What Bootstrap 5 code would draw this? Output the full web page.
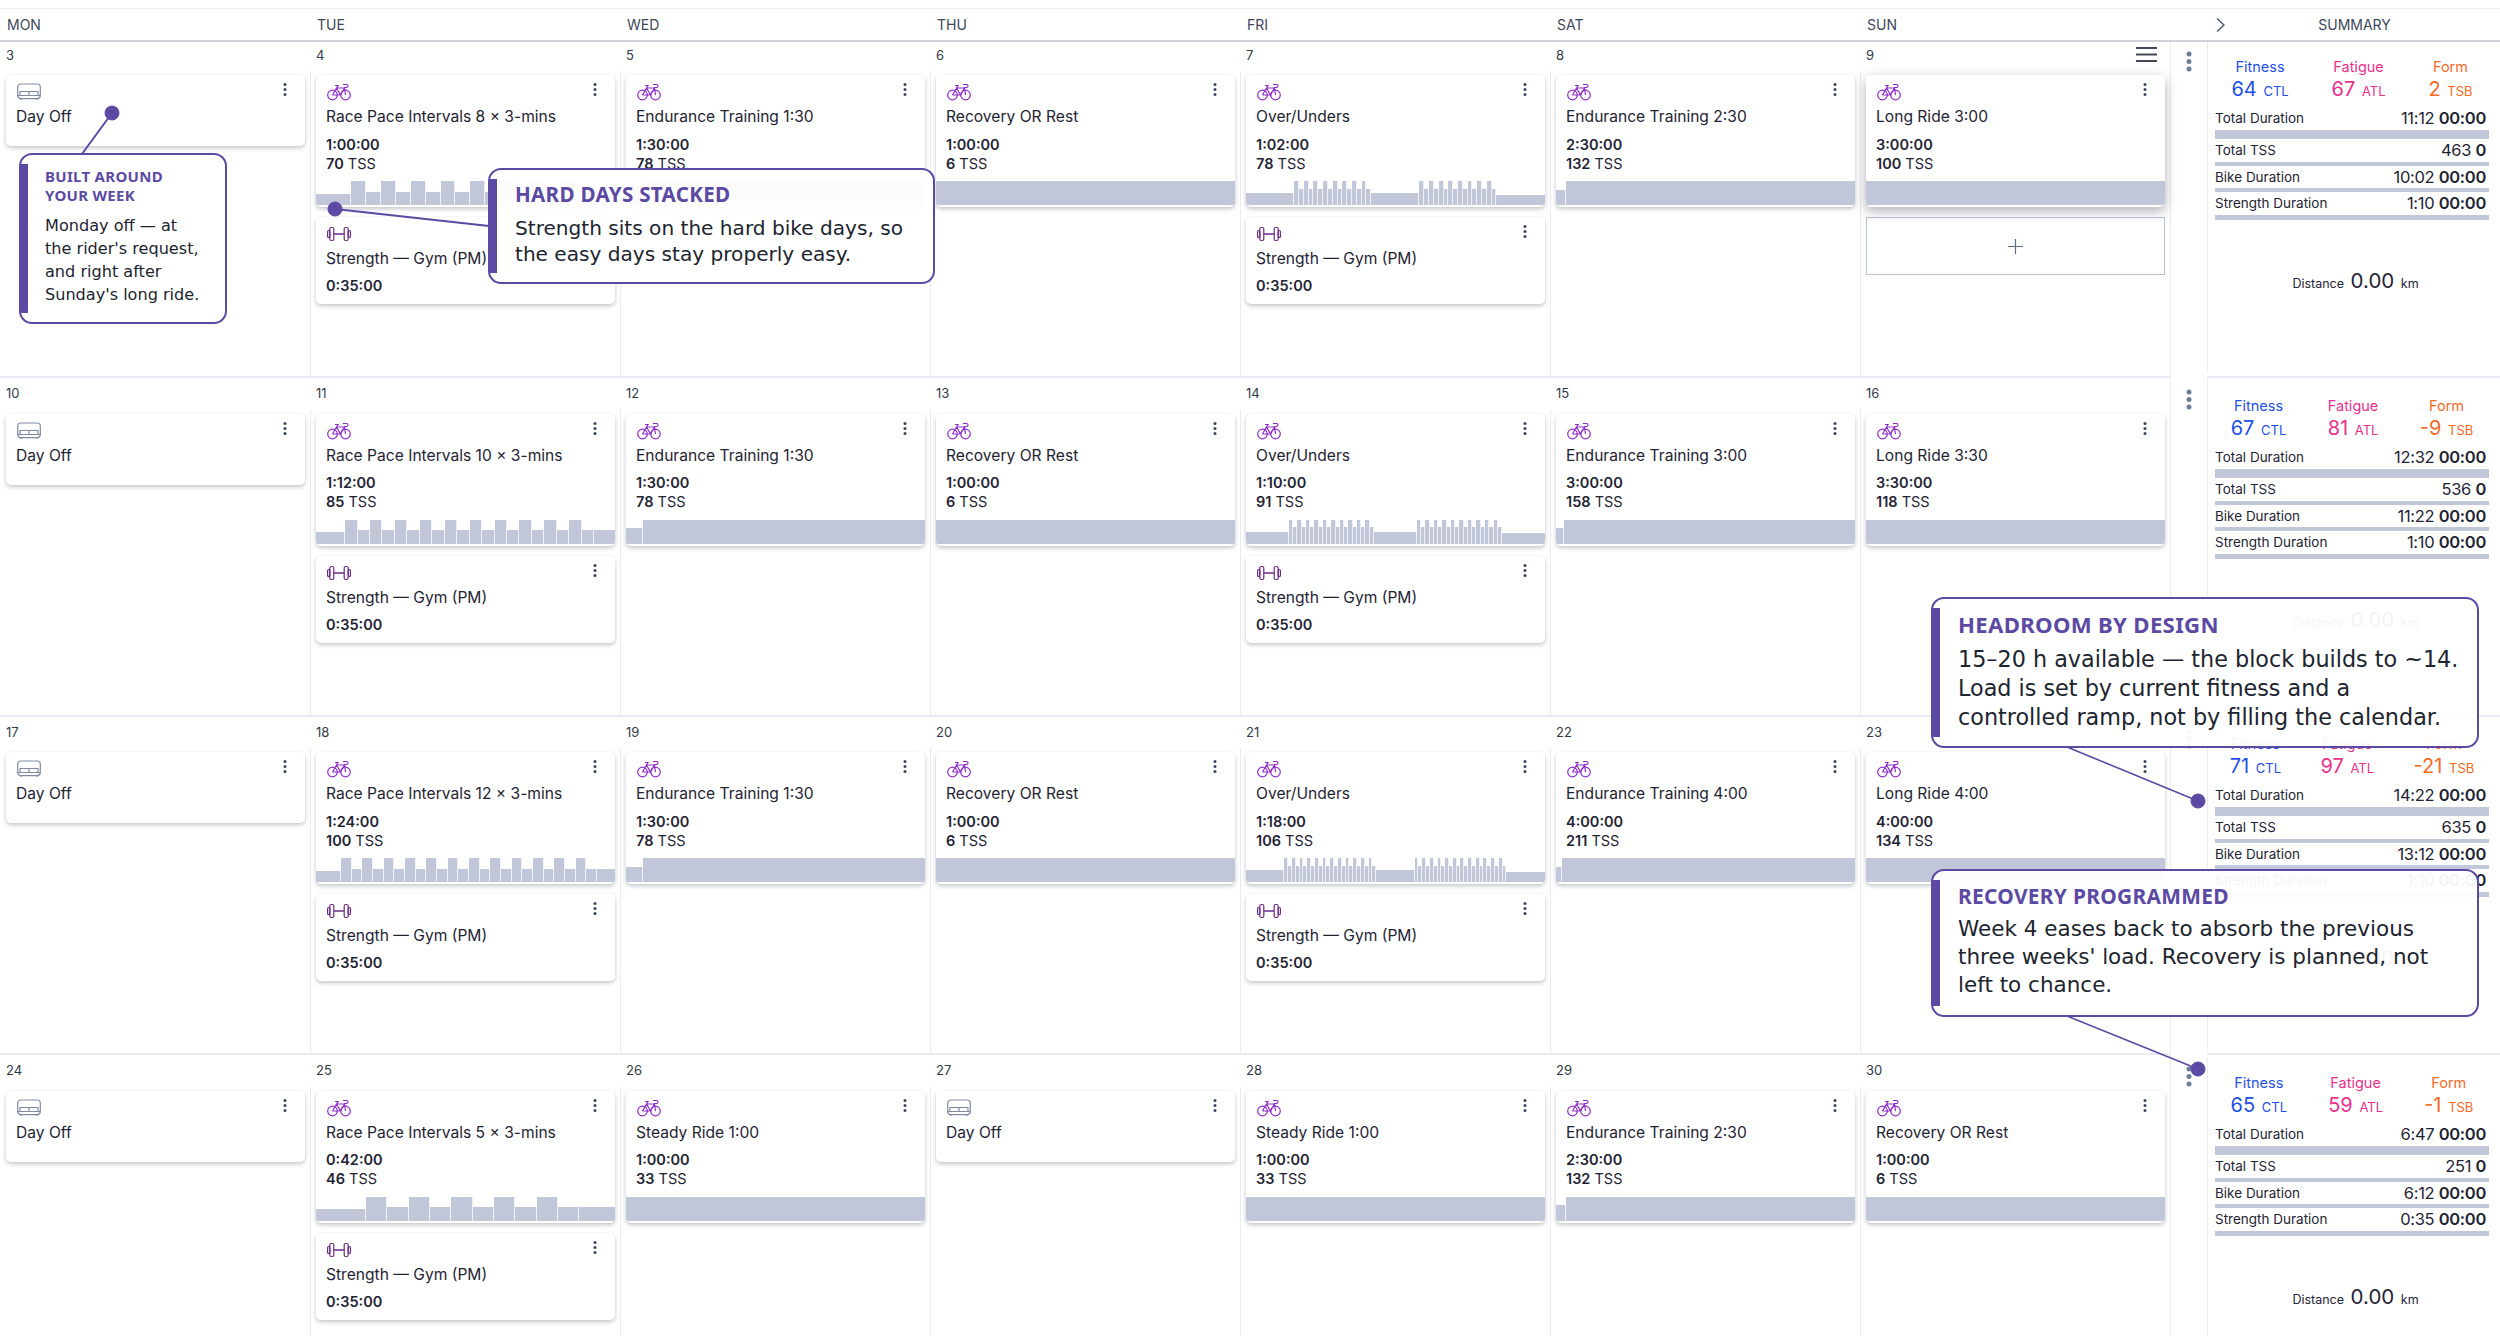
<!DOCTYPE html>
<html lang="en">
<head>
<meta charset="UTF-8">
<title>Training calendar</title>
<link rel="stylesheet" href="https://cdn.jsdelivr.net/npm/bootstrap@5.3.0/dist/css/bootstrap.min.css">
<style>
html, body { height: 1336px; overflow: hidden; background: #fff; }
body { font-family: Inter, "Liberation Sans", sans-serif; color: #1f2433; position: relative; }
.cal-grid { display: grid; grid-template-columns: repeat(7, 310px) 37px 293px; width: 2500px; }
.cal-head { margin-top: 8px; height: 34px; margin-bottom: -4.5px; border-top: 1px solid #eceef3; border-bottom: 2px solid #cfd2d9; background: #fff; position: relative; z-index: 2; font-size: 14px; color: #3d4758; line-height: 32px; }
.head-day { padding-left: 7px; }
.head-sum { grid-column: 8 / 10; padding-left: 46px; padding-right: 16px; }
.week { height: 338.5px; }
.day-cell { border-top: 2px solid #e9ecf4; height: 338.5px; }
.date-row { height: 31.5px; padding: 7px 13px 0 6px; font-size: 13px; line-height: 16px; color: #333a47; }
.day-body { height: 305px; padding: 4px 5px 0 6px; }
.day-cell + .day-cell .day-body { border-left: 1px solid #e9ebf0; padding-left: 5px; }
.wo-card { border: 0; border-radius: 5px; box-shadow: 0 2px 4px rgba(40, 45, 60, .28); margin-bottom: 10px; overflow: hidden; }
.wo-card.lifted { box-shadow: 0 4px 12px rgba(40, 45, 60, .38); }
.wo-top { height: 25px; padding: 8px 18px 0 11px; }
.kebab-sm { width: 4px; height: 13px; }
.wo-title { font-size: 15.6px; line-height: 18px; margin: 8px 0 0 10px; padding-bottom: 20px; white-space: nowrap; }
.wo-title.has-meta { padding-bottom: 0; }
.wo-meta { font-size: 14.5px; line-height: 19px; margin: 8.5px 0 0 10px; }
.wo-meta b { font-weight: 600; }
.wo-strength { margin-top: 8px; padding-bottom: 9px; }
.wo-chart { height: 24px; margin-top: 8.5px; margin-bottom: 2px; }
.wo-chart i { display: block; flex: none; background: #c1c7d9; border-right: 1px solid #eef0f5; }
.wo-chart i:last-child { border-right: 0; }
.add-box { height: 58px; border: 1px solid #b9c0d4; }
.dots-col { border-left: 1px solid #e9ebf0; padding-top: 13px; height: 338.5px; }
.sum-col { position: relative; padding: 18.5px 11px 0 8px; height: 338.5px; border-top: 2px solid #e9ecf4; }
.sum-col::before { content: ""; position: absolute; left: 0; top: 2px; bottom: 3px; width: 1px; background: #e9ebf0; }
.load-row { padding: 0 0 0 3px; justify-content: space-around; margin: 0 -5px 0 -8px; }
.load-label { font-size: 14.5px; line-height: 18px; }
.load-val { font-size: 20px; line-height: 26px; margin-bottom: -2px; white-space: nowrap; }
.load-val small { font-size: 13px; margin-left: 1px; }
.c-fit { color: #1f4fe8; }
.c-fat { color: #e8308c; }
.c-frm { color: #f56a1f; }
.sum-lines { margin-top: 6px; }
.sum-line { font-size: 13.5px; line-height: 20px; height: 20px; padding-right: 3px; }
.sum-line span:last-child { font-size: 16.5px; letter-spacing: -.3px; }
.sum-line b { font-weight: 600; }
.sum-bar { background: #c1c7d9; }
.dist-line { font-size: 12.5px; line-height: 26px; margin-top: 48px; padding-left: 7px; }
.dist-line span { font-size: 20.5px; margin: 0 3px; }
.note-line { position: absolute; left: 0; top: 0; z-index: 5; }
.note { position: absolute; z-index: 6; border: 2px solid #5b49a3; border-radius: 13px; background: rgba(255, 255, 255, .95); font-family: "DejaVu Sans", sans-serif; color: #20242e; white-space: nowrap; }
.note::before { content: ""; position: absolute; left: -1px; top: 9px; bottom: 9px; width: 8px; background: #5b49a3; }
.note h6 { font-family: "Noto Sans", sans-serif; font-weight: 700; color: #5b49a3; margin: 0; }
.note-built { left: 19px; top: 153px; width: 208px; height: 171px; padding: 12px 0 0 24px; font-size: 16.1px; line-height: 23px; }
.note-built h6 { font-size: 15px; line-height: 19px; margin-bottom: 9px; letter-spacing: .3px; }
.note-hard { left: 488px; top: 168px; width: 447px; height: 116px; padding: 12px 0 0 25px; font-size: 20.1px; line-height: 26.5px; }
.note-hard h6 { font-size: 20.6px; line-height: 24px; margin-bottom: 8.5px; letter-spacing: .3px; }
.note-room { left: 1931px; top: 597px; width: 548px; height: 151px; padding: 12.5px 0 0 25px; font-size: 22.3px; line-height: 29px; }
.note-room h6 { font-size: 22.2px; line-height: 26px; margin-bottom: 7px; letter-spacing: .3px; }
.note-rec { left: 1931px; top: 869px; width: 548px; height: 148px; padding: 12px 0 0 25px; font-size: 21.5px; line-height: 28px; }
.note-rec h6 { font-size: 20.9px; line-height: 26px; margin-bottom: 6px; letter-spacing: .3px; }
</style>
</head>
<body>

<div class="cal-grid cal-head" id="head"></div>
<div id="weeks"></div>

<svg class="note-line" width="2500" height="1336" fill="#5b49a3" stroke="#5b49a3">
    <line x1="112" y1="113" x2="82" y2="154" stroke-width="2"/><circle cx="112" cy="113" r="7"/>
    <line x1="335" y1="209" x2="489" y2="226" stroke-width="2"/><circle cx="335" cy="209" r="7"/>
    <line x1="2198" y1="801" x2="2067" y2="747" stroke-width="1.6"/><circle cx="2198" cy="801" r="7"/>
    <line x1="2198" y1="1069" x2="2067" y2="1016" stroke-width="1.6"/><circle cx="2198" cy="1069" r="7"/>
</svg>

<div class="note note-built">
    <h6>BUILT AROUND<br>YOUR WEEK</h6>
    Monday off — at<br>the rider's request,<br>and right after<br>Sunday's long ride.
</div>
<div class="note note-hard">
    <h6>HARD DAYS STACKED</h6>
    Strength sits on the hard bike days, so<br>the easy days stay properly easy.
</div>
<div class="note note-room">
    <h6>HEADROOM BY DESIGN</h6>
    15–20 h available — the block builds to ~14.<br>Load is set by current fitness and a<br>controlled ramp, not by filling the calendar.
</div>
<div class="note note-rec">
    <h6>RECOVERY PROGRAMMED</h6>
    Week 4 eases back to absorb the previous<br>three weeks' load. Recovery is planned, not<br>left to chance.
</div>

<script src="https://cdn.jsdelivr.net/npm/bootstrap@5.3.0/dist/js/bootstrap.bundle.min.js"></script>
<script>
// icons
const bike = `<svg width="24" height="18" viewBox="0 0 24 18" fill="none" stroke="#8f2fc9" stroke-width="1.2"><circle cx="5.5" cy="12" r="4.8"/><circle cx="18.5" cy="12" r="4.8"/><path d="M5.5 12 9.5 5h8l1 7M9.5 5l4 7H5.5M13.5 12l4-7M8 2.5h3l-1.500 2.500M16 1.500h3.500a1.500 1.500 0 0 1 0 3H17.500l-.2.500"/></svg>`;
const sofa = `<svg width="24" height="18" viewBox="0 0 24 18" fill="none" stroke="#7f8aa3" stroke-width="1.200"><rect x=".7" y="1" width="22.600" height="14.600" rx="3"/><path d="M3 8.500h18v4H3zM12 8.500v4M1 12.500h2M21 12.500h2M4 15.600v1.400M20 15.600v1.400"/></svg>`;
const bell = `<svg width="24" height="18" viewBox="0 0 24 18" fill="none" stroke="#6c2a85" stroke-width="1.200"><rect x=".6" y="5.500" width="2.200" height="7" rx="1"/><rect x="2.800" y="2.500" width="4" height="13" rx="1.500"/><rect x="17.200" y="2.500" width="4" height="13" rx="1.500"/><rect x="21.200" y="5.500" width="2.200" height="7" rx="1"/><path d="M6.800 9h10.400" stroke-width="1.500"/></svg>`;
const kebab = `<svg class="kebab-sm" viewBox="0 0 4 13" fill="#3a4560"><circle cx="2" cy="1.500" r="1.500"/><circle cx="2" cy="6.500" r="1.500"/><circle cx="2" cy="11.500" r="1.500"/></svg>`;

// workout charts: each bar is [minutes, height %]
function racePace(n) {
    const b = [[7, 46]];
    for (let i = 0; i < n; i++) b.push([3, 100], [3, 55]);
    b.push([5, 55]);
    return b;
}
function overUnders(n) {
    const b = [[10, 50]];
    for (let s = 0; s < 2; s++) {
        for (let i = 0; i < n; i++) b.push([1, 100], [1, 68]);
        if (s == 0) b.push([10, 50]);
    }
    b.push([10, 42]);
    return b;
}
const endurance = mins => [[5, 63], [mins - 5, 100]];
const flat = [[1, 100]];

function chart(bars) {
    const total = bars.reduce((a, b) => a + b[0], 0);
    return `<div class="wo-chart d-flex align-items-end">` +
        bars.map(b => `<i style="width:${b[0] / total * 100}%;height:${b[1]}%"></i>`).join("") + `</div>`;
}

function off() {
    return `<div class="card wo-card"><div class="wo-top d-flex justify-content-between">${sofa}${kebab}</div><div class="wo-title">Day Off</div></div>`;
}
function ride(title, time, tss, bars, extra) {
    return `<div class="card wo-card ${extra || ""}"><div class="wo-top d-flex justify-content-between">${bike}${kebab}</div>
        <div class="wo-title has-meta">${title}</div>
        <div class="wo-meta"><b>${time}</b><br><b>${tss}</b> TSS</div>${chart(bars)}</div>`;
}
function gym() {
    return `<div class="card wo-card"><div class="wo-top d-flex justify-content-between">${bell}${kebab}</div>
        <div class="wo-title has-meta">Strength — Gym (PM)</div>
        <div class="wo-meta wo-strength"><b>0:35:00</b></div></div>`;
}
const rec = () => ride("Recovery OR Rest", "1:00:00", 6, flat);
const end130 = () => ride("Endurance Training 1:30", "1:30:00", 78, endurance(90));

const weeks = [
    { from: 3, days: [off(),
        ride("Race Pace Intervals 8 × 3-mins", "1:00:00", 70, racePace(8)) + gym(),
        end130(), rec(),
        ride("Over/Unders", "1:02:00", 78, overUnders(8)) + gym(),
        ride("Endurance Training 2:30", "2:30:00", 132, endurance(150)),
        ride("Long Ride 3:00", "3:00:00", 100, flat, "lifted") +
            `<div class="add-box d-flex align-items-center justify-content-center"><svg width="15" height="15" stroke="#5f6b85" stroke-width="1.200"><path d="M7.500 0v15M0 7.500h15"/></svg></div>`],
      load: [64, 67, 2], sum: ["11:12", "463", "10:02", "1:10"] },
    { from: 10, days: [off(),
        ride("Race Pace Intervals 10 × 3-mins", "1:12:00", 85, racePace(10)) + gym(),
        end130(), rec(),
        ride("Over/Unders", "1:10:00", 91, overUnders(10)) + gym(),
        ride("Endurance Training 3:00", "3:00:00", 158, endurance(180)),
        ride("Long Ride 3:30", "3:30:00", 118, flat)],
      load: [67, 81, -9], sum: ["12:32", "536", "11:22", "1:10"] },
    { from: 17, days: [off(),
        ride("Race Pace Intervals 12 × 3-mins", "1:24:00", 100, racePace(12)) + gym(),
        end130(), rec(),
        ride("Over/Unders", "1:18:00", 106, overUnders(12)) + gym(),
        ride("Endurance Training 4:00", "4:00:00", 211, endurance(240)),
        ride("Long Ride 4:00", "4:00:00", 134, flat)],
      load: [71, 97, -21], sum: ["14:22", "635", "13:12", "1:10"] },
    { from: 24, days: [off(),
        ride("Race Pace Intervals 5 × 3-mins", "0:42:00", 46, racePace(5)) + gym(),
        ride("Steady Ride 1:00", "1:00:00", 33, flat), off(),
        ride("Steady Ride 1:00", "1:00:00", 33, flat),
        ride("Endurance Training 2:30", "2:30:00", 132, endurance(150)),
        rec()],
      load: [65, 59, -1], sum: ["6:47", "251", "6:12", "0:35"] }
];

const head = document.getElementById("head");
head.innerHTML = ["MON", "TUE", "WED", "THU", "FRI", "SAT", "SUN"].map(d => `<div class="head-day">${d}</div>`).join("") +
    `<div class="head-sum d-flex align-items-center"><svg width="9" height="14" fill="none" stroke="#4f5d75" stroke-width="1.500"><path d="M1 .5 8 7l-7 6.500"/></svg><span class="flex-grow-1 text-center">SUMMARY</span></div>`;

const sumRows = [["Total Duration", 9, 2, "00:00"], ["Total TSS", 4, 2, "0"], ["Bike Duration", 4, 1, "00:00"], ["Strength Duration", 5, 2, "00:00"]];

document.getElementById("weeks").innerHTML = weeks.map((w, wi) => {
    const days = w.days.map((html, i) => {
        const burger = (wi == 0 && i == 6) ? `<svg width="21" height="15" fill="#444a55"><rect width="21" height="2"/><rect y="6.500" width="21" height="2"/><rect y="13" width="21" height="2"/></svg>` : "";
        return `<div class="day-cell"><div class="date-row d-flex justify-content-between"><span>${w.from + i}</span>${burger}</div><div class="day-body">${html}</div></div>`;
    }).join("");
    const l = w.load;
    const rows = sumRows.map((r, i) => `<div class="sum-line d-flex justify-content-between"><span>${r[0]}</span><span>${w.sum[i]} <b>${r[3]}</b></span></div>
        <div class="sum-bar" style="height:${r[1]}px;margin-top:${r[2]}px;margin-bottom:1px"></div>`).join("");
    return `<div class="cal-grid week">${days}
        <div class="dots-col"><svg class="d-block mx-auto" width="6" height="21" fill="#6f7d95"><circle cx="3" cy="3" r="2.500"/><circle cx="3" cy="10.500" r="2.500"/><circle cx="3" cy="18" r="2.500"/></svg></div>
        <div class="sum-col">
            <div class="load-row d-flex text-center">
                <div class="c-fit"><div class="load-label">Fitness</div><div class="load-val">${l[0]} <small>CTL</small></div></div>
                <div class="c-fat"><div class="load-label">Fatigue</div><div class="load-val">${l[1]} <small>ATL</small></div></div>
                <div class="c-frm"><div class="load-label">Form</div><div class="load-val">${l[2]} <small>TSB</small></div></div>
            </div>
            <div class="sum-lines">${rows}</div>
            <div class="dist-line text-center">Distance <span>0.00</span> km</div>
        </div>
    </div>`;
}).join("");
</script>
</body>
</html>
